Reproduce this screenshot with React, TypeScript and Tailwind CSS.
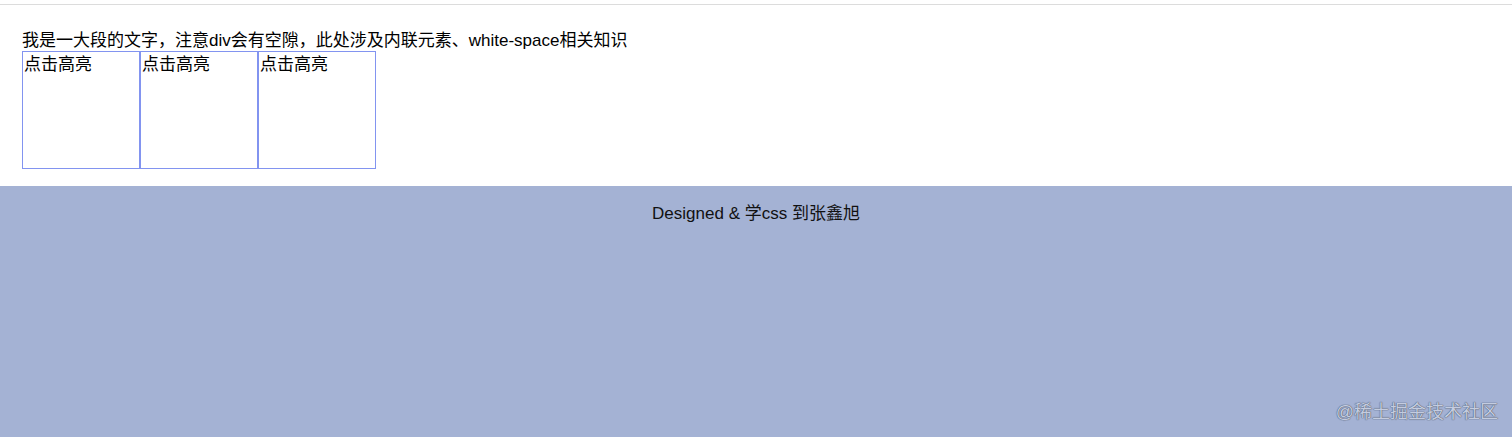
export default function App() {
  const boxes = ["点击高亮", "点击高亮", "点击高亮"];
  return (
    <div
      className="relative w-[1512px] h-[437px] flex flex-col bg-white text-black overflow-hidden"
      style={{ fontFamily: '"Liberation Sans", "Noto Sans CJK SC", sans-serif' }}
    >
      <div className="mt-[4px] h-px bg-[#dcdcdc]" />
      <div className="px-[22px] pt-[25px] pb-[17px]">
        <div className="text-[17px] leading-[21px]">
          我是一大段的文字，注意div会有空隙，此处涉及内联元素、white-space相关知识
        </div>
        <div className="flex">
          {boxes.map((b, i) => (
            <div
              key={i}
              className="w-[118px] h-[118px] border border-[#8294f0] text-[17px] leading-[20px] pl-[1px] pt-[3px]"
            >
              {b}
            </div>
          ))}
        </div>
      </div>
      <div className="flex-1 bg-[#a4b2d4] pt-[16px] text-center text-[17px] leading-[24px] text-[#111]">
        Designed &amp; 学css 到张鑫旭
      </div>
      <div
        className="absolute right-[14px] bottom-[14px] text-[18px] leading-[22px] text-[#c4cce0]"
        style={{ textShadow: "0 0 1px #4b5563, 0 0 1px #4b5563" }}
      >
        @稀土掘金技术社区
      </div>
    </div>
  );
}
